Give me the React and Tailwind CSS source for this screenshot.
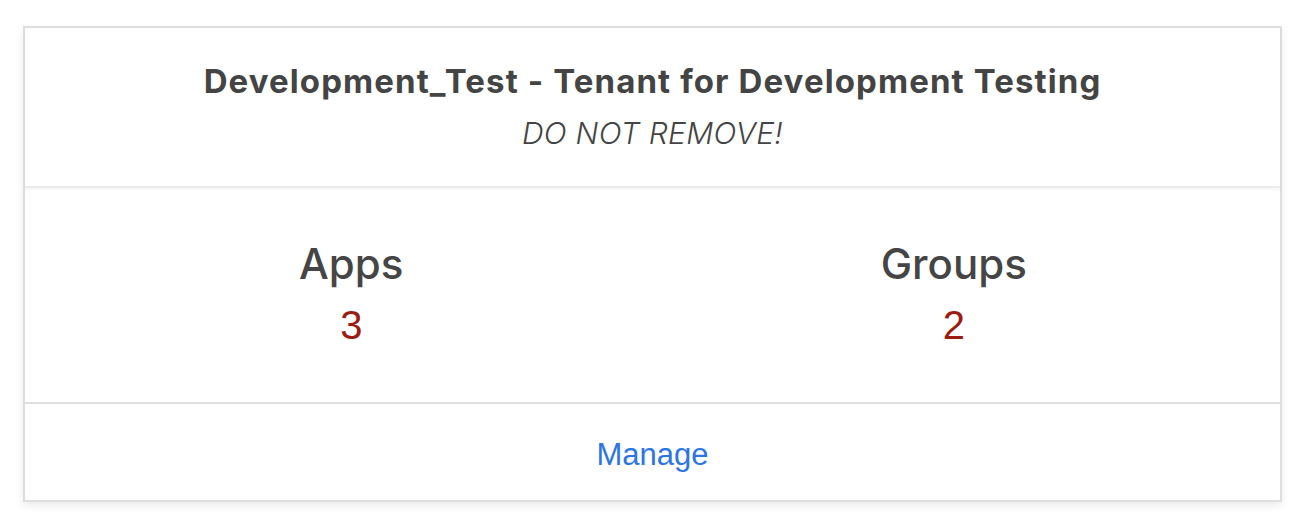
import React from "react";

export default function App() {
  return (
    <div className="w-[1304px] h-[528px] bg-white pt-[26px] pl-[23px]" style={{ fontFamily: '"Liberation Sans", Arial, sans-serif' }}>
      <div className="w-[1259px] border-2 border-[#dedede] bg-white shadow-[0_4px_8px_rgba(0,0,0,0.08)] flex flex-col">
        <div className="h-[160px] flex flex-col items-center justify-center border-b-2 border-[#ececec] shadow-[0_2px_3px_rgba(0,0,0,0.04)] relative z-10">
          <div className="text-[33px] font-bold text-[#444] leading-[38px] tracking-[1.1px] -mt-[2px]" style={{ fontFamily: 'Inter, "Liberation Sans", sans-serif' }}>Development_Test - Tenant for Development Testing</div>
          <div className="text-[30px] italic font-light text-[#444] leading-[36px] tracking-[0.3px] mt-[15px]" style={{ fontFamily: 'Inter, "Liberation Sans", sans-serif' }}>DO NOT REMOVE!</div>
        </div>
        <div className="h-[216px] grid grid-cols-2 px-[25px] items-center border-b-2 border-[#dedede]">
          <div className="flex flex-col items-center -mt-[2px]">
            <div className="text-[42px] font-medium text-[#454545] leading-[48px]" style={{ fontFamily: 'Inter, "Liberation Sans", sans-serif' }}>Apps</div>
            <div className="text-[40px] text-[#9b1c13] leading-[48px] mt-[13px]">3</div>
          </div>
          <div className="flex flex-col items-center -mt-[2px]">
            <div className="text-[42px] font-medium text-[#454545] leading-[48px]" style={{ fontFamily: 'Inter, "Liberation Sans", sans-serif' }}>Groups</div>
            <div className="text-[40px] text-[#9b1c13] leading-[48px] mt-[13px]">2</div>
          </div>
        </div>
        <div className="h-[96px] flex items-center justify-center">
          <a className="text-[31px] text-[#2d74e4] leading-[38px] mt-[5px]">Manage</a>
        </div>
      </div>
    </div>
  );
}
